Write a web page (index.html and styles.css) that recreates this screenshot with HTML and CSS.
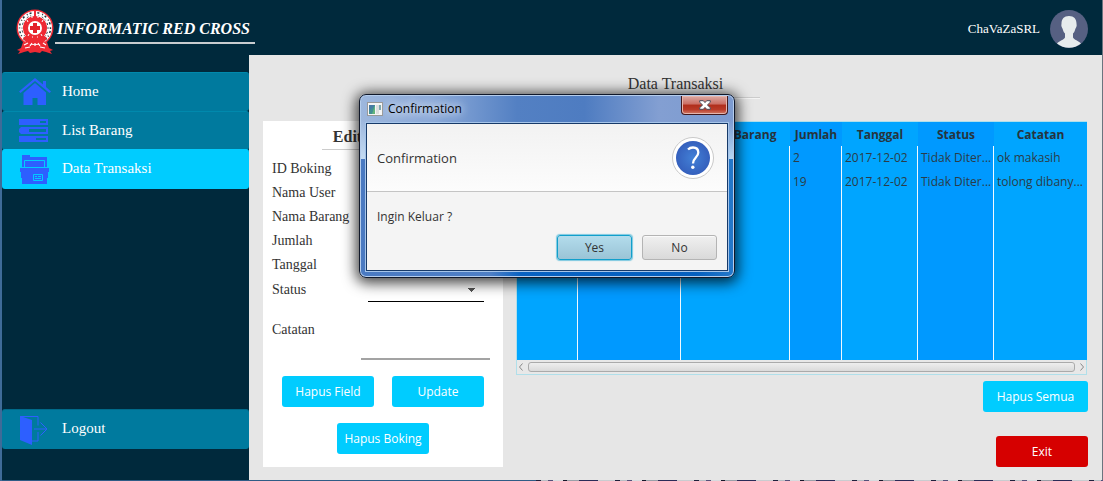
FILE: index.html
```html
<!DOCTYPE html>
<html lang="id">
<head>
<meta charset="utf-8">
<title>Informatic Red Cross</title>
<link rel="stylesheet" href="styles.css">
</head>
<body>
<div class="app">
  <header class="topbar">
    <div class="brand">
      <svg class="brand-logo" viewBox="0 0 38 46" aria-hidden="true">
        <path d="M7 33 5 39 1 41l3 1-2 3 6-2 4-1 2 2 5-1 5 1 2-2 4 1 6 2-2-3 3-1-4-2-2-6z" fill="#ee2a34"/>
        <circle cx="19" cy="19" r="18.500" fill="#ee2a34"/>
        <circle cx="19" cy="19" r="14.500" fill="none" stroke="#fff" stroke-width="5"/>
        <circle cx="19" cy="19" r="15.500" fill="none" stroke="#26343d" stroke-width="1.500" stroke-dasharray="1 2 2 3"/>
        <circle cx="19" cy="19" r="13" fill="none" stroke="#26343d" stroke-width="1" stroke-dasharray="1 3 2 2"/>
        <path d="M18 1h2v8h-2z M7 29 11 35h16l4-6-5-4H12z" fill="#ee2a34"/>
        <path d="M8 36l4-2M14 37l2-3M19 34v3M22 34l2 3M27 34l3 2M9 39l5-1M24 38l5 1" stroke="#fff" stroke-width="1.200"/>
        <circle cx="19" cy="19" r="11" fill="#ee2a34"/>
        <circle cx="19" cy="19" r="7" fill="#fff"/>
        <path d="M17 14h4v3h3v4h-3v3h-4v-3h-3v-4h3z" fill="#e3222c"/>
        <path d="M16 5v4M22 5v4M11 11l1 2M27 11l-1 2M12 27l1-2M26 27l-1-2M16 28h1M21 28h1" stroke="#fff" stroke-width="1"/>
      </svg>
      <span class="brand-name">INFORMATIC RED CROSS</span>
    </div>
    <div class="user">
      <span>ChaVaZaSRL</span>
      <svg class="avatar" viewBox="0 0 38 38" aria-hidden="true">
        <circle cx="19" cy="19" r="19" fill="#566082"/>
        <path d="M19 6c-5 0-7.500 3-7.500 7.500 0 1-.5 2 .2 3.500.5 1 .8 1.300 1.300 3 .4 1.500 1 2.500 2 3.500v4c-1 2.500-5.500 3-8 6a19 19 0 0 0 24 0c-2.500-3-7-3.500-8-6v-4c1-1 1.600-2 2-3.500.5-1.700.8-2 1.300-3 .7-1.500.2-2.500.2-3.500C26.500 9 24 6 19 6z" fill="#e7eced"/>
      </svg>
    </div>
  </header>

  <nav class="sidebar">
    <a class="nav-item" href="#home">
      <svg viewBox="0 0 32 30" aria-hidden="true"><path d="M0 14.500 16 1l8 6.500V4h3v6l5 4.500-1.500 1.500L16 4 1.500 16z M4.500 16 16 6l11 9.500V28h-8.500v-7h-5v7h-9z"/></svg>
      <span>Home</span>
    </a>
    <a class="nav-item" href="#barang">
      <svg viewBox="0 0 32 30" aria-hidden="true"><path fill-rule="evenodd" d="M0 3h29v6H0z M21 5v2h6V5z M2 11h27v7H2l-2-2v-3z M10 13v3h17v-3z M0 20h29v6H0z M17 22v2h10v-2z"/></svg>
      <span>List Barang</span>
    </a>
    <a class="nav-item nav-item-active" href="#transaksi" aria-current="page">
      <svg viewBox="0 0 32 30" aria-hidden="true">
        <path d="M3 0h8v2h17v11H3z M1 13h29v4h-1v6h-1v6H3v-6H2v-6H1z"/>
        <path d="M5.500 12V5.500h20V12 M1 12.500h29 M14.500 19.500h9v6h-9z M16 21.500h2 M19 21.500h3 M16 23.500h6" class="cut"/>
        <path d="M7 6h17v2h1v4H6V8h1z"/>
      </svg>
      <span>Data Transaksi</span>
    </a>
    <a class="nav-item nav-item-last" href="#logout">
      <svg viewBox="0 0 32 30" aria-hidden="true"><path d="M1 1 13 5v25L1 25z"/><path d="M1 1.500h18v9 M19 17v9h-6 M15 14h13 M21.500 7.500l6.500 6.500-6.500 6.500" class="stroke"/></svg>
      <span>Logout</span>
    </a>
  </nav>

  <main class="content">
    <h1 class="page-title">Data Transaksi</h1>
    <div class="panels">
      <form class="card">
        <h2 class="card-title">Edit Transaksi</h2>
        <div class="field"><label for="id">ID Boking</label><input id="id" type="text"></div>
        <div class="field"><label for="user">Nama User</label><input id="user" type="text"></div>
        <div class="field"><label for="barang">Nama Barang</label><input id="barang" type="text"></div>
        <div class="field"><label for="jumlah">Jumlah</label><input id="jumlah" type="text"></div>
        <div class="field"><label for="tanggal">Tanggal</label><input id="tanggal" type="text"></div>
        <div class="field field-status"><label for="status">Status</label><select id="status"><option></option></select></div>
        <div class="field field-note"><label for="catatan">Catatan</label><textarea id="catatan"></textarea></div>
        <div class="card-actions">
          <button class="btn" type="button">Hapus Field</button>
          <button class="btn" type="button">Update</button>
          <button class="btn" type="button">Hapus Boking</button>
        </div>
      </form>

      <section class="records">
        <div class="table-box">
          <table>
            <colgroup><col class="c-id"><col class="c-user"><col class="c-item"><col class="c-qty"><col class="c-date"><col class="c-date"><col class="c-note"></colgroup>
            <thead><tr><th></th><th></th><th>Nama Barang</th><th>Jumlah</th><th>Tanggal</th><th>Status</th><th>Catatan</th></tr></thead>
            <tbody>
              <tr><td></td><td></td><td></td><td>2</td><td>2017-12-02</td><td>Tidak Diter...</td><td>ok makasih</td></tr>
              <tr><td></td><td></td><td></td><td>19</td><td>2017-12-02</td><td>Tidak Diter...</td><td>tolong dibany...</td></tr>
              <tr class="rest"><td></td><td></td><td></td><td></td><td></td><td></td><td></td></tr>
            </tbody>
          </table>
          <div class="scrollbar">
            <svg viewBox="0 0 6 10" aria-hidden="true"><path d="M4.500 1.500 1.500 5l3 3.500"/></svg>
            <div class="thumb"></div>
            <svg viewBox="0 0 6 10" aria-hidden="true"><path d="M1.500 1.500 4.500 5l-3 3.500"/></svg>
          </div>
        </div>
        <button class="btn btn-wide" type="button">Hapus Semua</button>
        <button class="btn btn-exit" type="button">Exit</button>
      </section>
    </div>
  </main>

  <div class="dialog" role="dialog" aria-labelledby="dialog-title">
    <div class="dialog-bar">
      <svg class="dialog-icon" viewBox="0 0 16 14" aria-hidden="true">
        <rect x=".5" y=".5" width="15" height="13" fill="#f5f5f5" stroke="#999"/>
        <rect x="2" y="3" width="6" height="9" fill="#438f94"/>
        <path d="M2 3h6L2 9z" fill="#477aa4"/><path d="M8 3v9H5z" fill="#63b47c"/>
        <path d="M9 3h3v9H9z" fill="#dedede"/><path d="M12 3h2v5h-2z" fill="#7faab0"/>
      </svg>
      <span class="dialog-title" id="dialog-title">Confirmation</span>
      <button class="dialog-close" type="button" aria-label="Close">
        <svg viewBox="0 0 12 10" aria-hidden="true"><path d="M.7.700h3.600L6 2.600 7.700.7h3.600v1.600L8.400 5l2.900 2.700v1.600H7.700L6 7.400 4.300 9.300H.7V7.700L3.600 5 .7 2.300z"/></svg>
      </button>
    </div>
    <div class="dialog-body">
      <div class="dialog-head">
        <span>Confirmation</span>
        <svg class="question" viewBox="0 0 42 42" aria-hidden="true">
          <defs><radialGradient id="q"><stop offset="0" stop-color="#4280d6"/><stop offset="1" stop-color="#3560bd"/></radialGradient></defs>
          <circle cx="21" cy="21" r="20.500" fill="#fff" stroke="#c9c9c9"/>
          <circle cx="21" cy="21" r="17" fill="url(#q)"/>
          <path d="M16 12.500c1.300-1.300 3-2 5-2 3.500 0 5.300 2.200 5.300 5 0 5-5.300 5-5.300 11" fill="none" stroke="#fff" stroke-width="2.300"/>
          <circle cx="20.800" cy="30.200" r="1.700" fill="#fff"/>
        </svg>
      </div>
      <p class="dialog-text">Ingin Keluar ?</p>
      <div class="dialog-actions">
        <button class="dbtn dbtn-default" type="button">Yes</button>
        <button class="dbtn" type="button">No</button>
      </div>
    </div>
  </div>
</div>
</body>
</html>
```
FILE: styles.css
```css
* { box-sizing: border-box; }

body {
  margin: 0;
  font-family: "Liberation Serif", serif;
  background:
    repeating-linear-gradient(90deg, #20203c 0 5px, #b9bec4 5px 12px, #54507a 12px 17px, #d8dade 17px 27px, #17172a 27px 31px, #9aa0a8 31px 43px, #2b2b58 43px 62px, #c9ccd0 62px 79px) 536px bottom / 100% 1px no-repeat,
    linear-gradient(90deg, #3f6b98 0 2px, #2f5c86 2px 1000px, #6b747f 1000px);
}

.app {
  position: relative;
  display: grid;
  grid-template: 55px 1fr / 247px 1fr;
  min-height: 100vh;
  padding: 0 1px 1px 2px;
}

.topbar {
  grid-column: 1 / 3;
  display: flex;
  justify-content: space-between;
  padding: 0 14px;
  background: #00293c;
  color: #fff;
}

.brand { display: flex; align-items: flex-start; gap: 1px; padding-top: 9px; }
.brand-logo { width: 38px; height: 46px; }
.brand-name {
  height: 35px;
  padding: 10px 5px 0 2px;
  font: italic bold 16px/20px "Liberation Serif", serif;
  border-bottom: 2px solid #c8cccf;
}

.user { display: flex; align-items: center; gap: 10px; padding-top: 2px; font-size: 13px; }
.avatar { width: 38px; height: 38px; }

.sidebar {
  display: flex;
  flex-direction: column;
  padding: 17px 0 31px;
  background: #00293c;
}
.nav-item {
  display: flex;
  align-items: center;
  gap: 11px;
  height: 39px;
  padding-left: 17px;
  border-top: 1px solid #0089ad;
  border-radius: 3px;
  background: #007a9e;
  color: #fff;
  font-size: 15px;
  text-decoration: none;
}
.nav-item span { padding-bottom: 2px; }
.nav-item svg { width: 32px; height: 30px; fill: #2d5fff; }
.nav-item .stroke { fill: none; stroke: #2d5fff; }
.nav-item .cut { fill: none; stroke: #00ccff; }
.nav-item-active { height: 40px; margin-top: -1px; background: #00ccff; border-color: #00ccff; }
.nav-item-last { height: 40px; margin-top: auto; border-color: #006a8a; }

.content {
  display: flex;
  flex-direction: column;
  padding: 19px 14px 13px;
  background: #e6e6e6;
  color: #333;
}
.page-title {
  align-self: center;
  width: 168px;
  height: 24px;
  margin: 0 0 23px;
  border-bottom: 1px solid #ccc;
  box-shadow: 0 1px #f4f4f4;
  font-size: 16px;
  font-weight: normal;
  line-height: 20px;
  text-align: center;
}
.panels { display: grid; grid-template-columns: 240px 1fr; gap: 13px; flex: 1; }

.card { padding: 5px 9px 13px; background: #fff; }
.card-title {
  width: 122px;
  margin: 0 auto 7px;
  padding-bottom: 2px;
  border-bottom: 1px solid #ccc;
  font-size: 16px;
  line-height: 21px;
  text-align: center;
}
.field {
  display: grid;
  grid-template-columns: 96px 116px;
  align-items: center;
  height: 24px;
  font-size: 14px;
}
.field input { width: 100%; height: 20px; border: 0; background: none; }
.field-status { height: 25px; }
.field select {
  width: 100%;
  height: 25px;
  appearance: none;
  border: 0;
  border-bottom: 1px solid #000;
  border-radius: 0;
  background:
    linear-gradient(to bottom left, #555 50%, transparent 50%) 100px 11px / 4px 4px no-repeat,
    linear-gradient(to bottom right, #555 50%, transparent 50%) 104px 11px / 4px 4px no-repeat;
}
.field-note {
  grid-template-columns: 89px 129px;
  align-items: start;
  height: 58px;
  padding-top: 20px;
}
.field-note textarea {
  width: 100%;
  height: 38px;
  border: 0;
  border-bottom: 2px solid #a3a3a3;
  background: none;
  resize: none;
}
.card-actions {
  display: flex;
  flex-wrap: wrap;
  justify-content: center;
  gap: 16px 18px;
  padding-top: 16px;
}

.btn {
  width: 92px;
  height: 31px;
  padding: 0;
  border: 0;
  border-radius: 3px;
  background: #00ccff;
  color: #fff;
  font: 12px "Open Sans", sans-serif;
}

.records { display: flex; flex-direction: column; align-items: flex-end; min-width: 0; }
.btn-wide { width: 105px; margin: 6px 0 24px; }
.btn-exit { background: #d60000; }

.table-box {
  display: flex;
  flex-direction: column;
  align-self: stretch;
  flex: 1;
  margin-right: 1px;
  border: 1px solid #b0dfea;
}
table {
  flex: 1;
  width: 100%;
  table-layout: fixed;
  border-spacing: 0;
  font: 12px/16px "Open Sans", sans-serif;
}
.c-id { width: 61px; }
.c-user { width: 103px; }
.c-item { width: 109px; }
.c-qty { width: 52px; }
.c-date { width: 76px; }
.c-note { width: 93px; }
tr { height: 24px; }
.rest { height: 166px; }
th, td { padding: 0; background: #00a5ff; white-space: nowrap; }
th:nth-child(even), td:nth-child(even) { background: #0099ff; }
th { padding-top: 2px; color: #26343d; }
td { padding-left: 3px; color: #2b3c48; border-right: 1px solid #f0faff; }
td:last-child { border-right: 0; }

.scrollbar { display: flex; align-items: center; gap: 4px; height: 14px; padding: 0 1px; background: #e8e8e8; }
.scrollbar svg { width: 6px; height: 10px; fill: none; stroke: #888; }
.thumb { flex: 1; height: 10px; border: 1px solid #aaa; border-radius: 3px; background: linear-gradient(#eee, #dadada); }

.dialog {
  position: absolute;
  left: 359px;
  top: 94px;
  width: 376px;
  padding: 1px 6px 6px;
  border: 1px solid #10182a;
  border-radius: 7px;
  background:
    linear-gradient(transparent 25px, #c5dcf3) 0 0 / 7px 64px no-repeat,
    linear-gradient(transparent 25px, #b5d6f3) 100% 0 / 7px 64px no-repeat,
    linear-gradient(90deg, #9db7dd 0, #8ba9d8 20%, #5380c3 42%, #4e7cc1 60%, #839fd2 80%, #7c9bd0 100%) 0 0 / 100% 64px no-repeat,
    linear-gradient(90deg, #4a7ac2 0, #4e7fc6 35%, #0862c2 43%, #0560bf 90%, #2679ca 100%);
  box-shadow: inset 0 0 0 1px #b5cdec, 0 2px 14px 3px rgba(0, 0, 0, 0.75);
  font-family: "Open Sans", sans-serif;
  color: #333;
}
.dialog-bar { display: flex; align-items: flex-start; height: 27px; }
.dialog-icon { width: 16px; height: 14px; margin: 6px 0 0 1px; }
.dialog-title {
  margin: 4px 0 0 5px;
  color: #000;
  font-size: 12px;
  line-height: 17px;
  text-shadow: 0 0 8px #fff, 0 0 10px #dbe6f5;
}
.dialog-close {
  width: 47px;
  height: 19px;
  margin-left: auto;
  padding: 0;
  border: 1px solid #42181c;
  border-top: 0;
  border-radius: 0 0 4px 4px;
  background: linear-gradient(#dca9a3, #cb6d63 45%, #b02d1b 50%, #b93a28 75%, #d27c68);
  box-shadow: inset 0 0 0 1px #e5b5ad;
}
.dialog-close svg { display: block; width: 12px; height: 10px; margin: 0 auto; fill: #fff; stroke: #4b4b59; }

.dialog-body {
  border: 1px solid #173a69;
  outline: 1px solid #a6c5ea;
  background: #f4f4f4;
}
.dialog-head {
  display: flex;
  align-items: center;
  justify-content: space-between;
  height: 68px;
  padding: 0 13px 0 10px;
  border-bottom: 1px solid #c4c4c4;
  background: linear-gradient(#f2f2f2, #fcfcfc);
  font-size: 13px;
}
.question { width: 42px; height: 42px; }
.dialog-text { margin: 16px 10px 10px; font-size: 12px; line-height: 17px; }
.dialog-actions { display: flex; justify-content: flex-end; gap: 10px; padding: 0 10px 10px; }
.dbtn {
  width: 75px;
  height: 25px;
  padding: 0;
  border: 1px solid #b4b4b4;
  border-radius: 3px;
  background: linear-gradient(#f0f0f0, #d9d9d9);
  box-shadow: inset 0 1px #fafafa;
  color: #333;
  font: 12px "Open Sans", sans-serif;
}
.dbtn-default {
  border-color: #119fcb;
  background: linear-gradient(#b3dcec, #9ac4d6);
  box-shadow: 0 0 1px 1px #7cc8e0;
}
```
